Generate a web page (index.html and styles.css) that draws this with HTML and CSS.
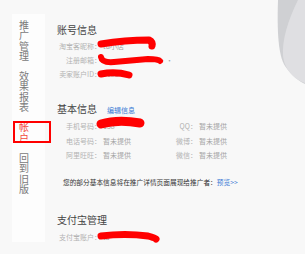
FILE: index.html
```html
<!DOCTYPE html>
<html lang="zh-CN">
<head>
    <meta charset="UTF-8">
    <meta name="viewport" content="width=device-width, initial-scale=1.0">
    <title>帐户</title>
    <link rel="stylesheet" href="styles.css">
</head>
<body>
    <div class="page">
        <aside class="side">
            <a class="nav-item" href="#">推广管理</a>
            <a class="nav-item" href="#">效果报表</a>
            <a class="nav-item current" href="#">帐户</a>
            <a class="nav-item" href="#">回到旧版</a>
        </aside>

        <main class="main">
            <section class="block">
                <h2 class="title">账号信息</h2>
                <div class="rows one">
                    <span class="label">淘宝客昵称：</span><span class="value">tu小店</span>
                    <span class="label">注册邮箱：</span><span class="value">··········</span>
                    <span class="label">卖家账户ID：</span><span class="value">2088</span>
                </div>
            </section>

            <section class="block basic">
                <div class="title-row">
                    <h2 class="title">基本信息</h2>
                    <a class="link edit" href="#">编辑信息</a>
                </div>
                <div class="rows two">
                    <span class="label">手机号码：</span><span class="value">138</span>
                    <span class="label">QQ：</span><span class="value">暂未提供</span>
                    <span class="label">电话号码：</span><span class="value">暂未提供</span>
                    <span class="label">微博：</span><span class="value">暂未提供</span>
                    <span class="label">阿里旺旺：</span><span class="value">暂未提供</span>
                    <span class="label">微信：</span><span class="value">暂未提供</span>
                </div>
                <p class="notice">您的部分基本信息将在推广详情页面展现给推广者：<a class="link" href="#">预览&gt;&gt;</a></p>
            </section>

            <section class="block alipay">
                <h2 class="title">支付宝管理</h2>
                <div class="rows one">
                    <span class="label">支付宝账户：</span><span class="value">ta</span>
                </div>
            </section>
        </main>

        <!-- corner swoosh and red pen marks drawn over the screenshot -->
        <svg class="notes" width="305" height="254" viewBox="0 0 305 254">
            <path d="M278 0 C277 30 278 55 285 66 C292 76 300 82 305 84 L305 0 Z" fill="#cfd0d3"/>
            <path d="M298 0 C288 20 282 40 283 55 C284 70 295 80 305 83 L305 0 Z" fill="#dfdfe2"/>
            <rect x="14" y="122" width="36" height="20" fill="none" stroke="#ff0000" stroke-width="2"/>
            <g fill="none" stroke="#ff0000" stroke-linecap="round" stroke-linejoin="round">
                <path d="M101 44 Q125 40 149 40 Q153 42 152 46" stroke-width="7"/>
                <path d="M101 57 Q102 63 114 62 L148 59 Q158 59 160 61" stroke-width="6"/>
                <path d="M101 74 Q115 71 129 75" stroke-width="7"/>
                <path d="M101 124 Q118 119 140 123" stroke-width="9"/>
                <path d="M101 236 Q125 233 148 236 Q155 238 156 239" stroke-width="7"/>
            </g>
        </svg>
    </div>
</body>
</html>
```

FILE: styles.css
```css
body {
    margin: 0;
    padding: 0;
    background-color: #f8f8f8;
    font-family: "Noto Sans CJK SC", "Liberation Sans", sans-serif;
}

.page {
    position: relative;
    width: 305px;
    height: 254px;
    overflow: hidden;
    display: flex;
    align-items: flex-start;
    padding: 14px 0 0 12px;
    box-sizing: border-box;
}

.side {
    width: 33px;
    height: 228px;
    padding: 6px 0 0 7px;
    box-sizing: border-box;
    background-color: #fdfdfd;
    flex-shrink: 0;
}

.nav-item {
    display: block;
    width: 1em;
    font-size: 10px;
    line-height: 10.3px;
    color: #7a7a7a;
    text-decoration: none;
    word-break: break-all;
    margin-bottom: 10px;
}

.nav-item.current {
    color: #f24b3c;
}

.main {
    margin-left: 12px;
    padding-top: 10px;
    flex: 1;
}

.title {
    margin: 0;
    font-size: 10px;
    line-height: 12px;
    font-weight: normal;
    color: #444;
}

.title-row {
    display: flex;
    align-items: baseline;
}

.link {
    color: #3a7bd5;
    text-decoration: none;
}

.edit {
    font-size: 7px;
    margin-left: 10px;
}

.rows {
    display: grid;
    column-gap: 2px;
    font-size: 7px;
    line-height: 14px;
    margin-top: 3px;
}

.rows.one {
    grid-template-columns: 44px auto;
}

.rows.two {
    grid-template-columns: 44px 66px 26px auto;
    line-height: 14.5px;
    margin-top: 4px;
}

.label {
    text-align: right;
    color: #b3b3b3;
    white-space: nowrap;
}

.value {
    color: #a3a3a3;
    white-space: nowrap;
}

.basic {
    margin-top: 22px;
}

.notice {
    margin: 12.5px 0 0;
    padding-left: 6px;
    font-size: 6.7px;
    line-height: 14px;
    color: #333;
    white-space: nowrap;
}

.alipay {
    margin-top: 25px;
}

.alipay .rows {
    margin-top: 4px;
}

.notes {
    position: absolute;
    left: 0;
    top: 0;
    pointer-events: none;
}
```
